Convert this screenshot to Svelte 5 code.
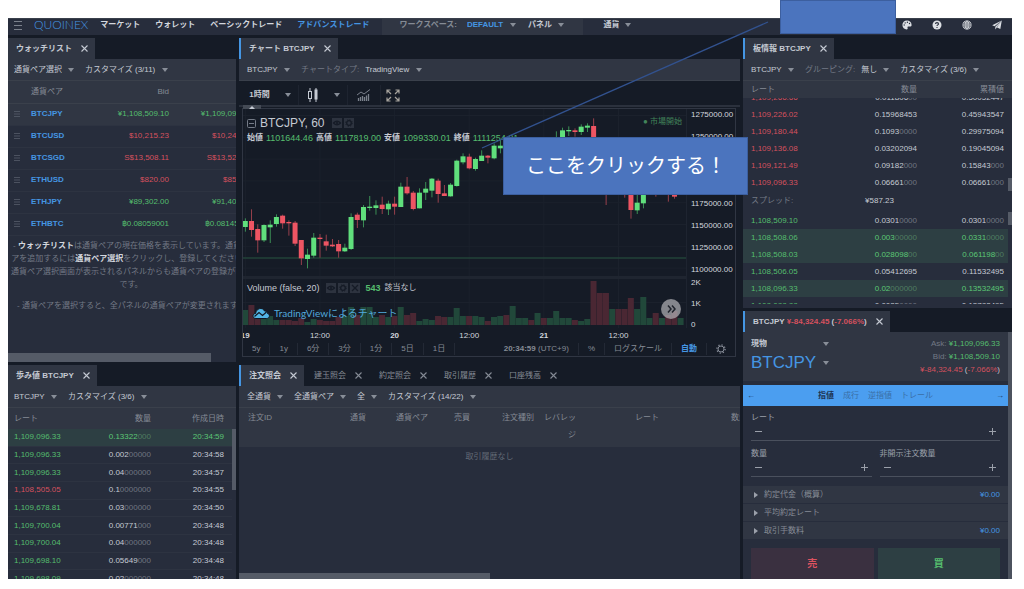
<script>
  const navLinks = ['マーケット', 'ウォレット', 'ベーシックトレード', 'アドバンストレード'];

  const watchlist = [
    { pair: 'BTCJPY', bid: '¥1,108,509.10', ask: '¥1,109,096.33', up: true },
    { pair: 'BTCUSD', bid: '$10,215.23', ask: '$10,243.20', up: false },
    { pair: 'BTCSGD', bid: 'S$13,508.11', ask: 'S$13,521.74', up: false },
    { pair: 'ETHUSD', bid: '$820.00', ask: '$858.00', up: false },
    { pair: 'ETHJPY', bid: '¥89,302.00', ask: '¥91,400.00', up: true },
    { pair: 'ETHBTC', bid: '฿0.08059001', ask: '฿0.08145000', up: true }
  ];

  // "|" marks where the dimmed trailing zeros begin
  const trades = [
    { rate: '1,109,096.33', qty: '0.13322|000', time: '20:34:59', up: true, fresh: true },
    { rate: '1,109,096.33', qty: '0.002|00000', time: '20:34:58', up: true },
    { rate: '1,109,096.33', qty: '0.04|000000', time: '20:34:57', up: true },
    { rate: '1,108,505.05', qty: '0.1|0000000', time: '20:34:55', up: false },
    { rate: '1,109,678.81', qty: '0.03|000000', time: '20:34:50', up: true },
    { rate: '1,109,700.04', qty: '0.00771|000', time: '20:34:48', up: true },
    { rate: '1,109,700.04', qty: '0.04|000000', time: '20:34:48', up: true },
    { rate: '1,109,698.10', qty: '0.05649|000', time: '20:34:48', up: true },
    { rate: '1,109,698.09', qty: '0.02|000000', time: '20:34:48', up: true }
  ];

  const asks = [
    { rate: '1,109,266.66', qty: '0.011806|00', sum: '0.50052447' },
    { rate: '1,109,226.02', qty: '0.15968453', sum: '0.45943547' },
    { rate: '1,109,180.44', qty: '0.1093|0000', sum: '0.29975094' },
    { rate: '1,109,136.08', qty: '0.03202094', sum: '0.19045094' },
    { rate: '1,109,121.49', qty: '0.09182|000', sum: '0.15843|000' },
    { rate: '1,109,096.33', qty: '0.06661|000', sum: '0.06661|000' }
  ];

  const bids = [
    { rate: '1,108,509.10', qty: '0.0301|0000', sum: '0.0301|0000' },
    { rate: '1,108,508.06', qty: '0.003|00000', sum: '0.0331|0000', fresh: true },
    { rate: '1,108,508.03', qty: '0.028098|00', sum: '0.061198|00', fresh: true },
    { rate: '1,108,506.05', qty: '0.05412695', sum: '0.11532495' },
    { rate: '1,108,096.33', qty: '0.02|000000', sum: '0.13532495', fresh: true },
    { rate: '1,108,088.88', qty: '0.0025|0000', sum: '0.13782495' }
  ];

  const orderTabs = ['注文照会', '建玉照会', '約定照会', '取引履歴', '口座残高'];
  const orderHeads = ['注文ID', '通貨', '通貨ペア', '売買', '注文種別', 'レバレッジ', 'レート', '数量', ''];

  const ohlc = [
    ['始値', '1101644.46'],
    ['高値', '1117819.00'],
    ['安値', '1099330.01'],
    ['終値', '1111254.81']
  ];

  const prices = ['1275000.00', '1250000.00', '1225000.00', '1200000.00', '1175000.00', '1150000.00', '1125000.00', '1100000.00'];
  const times = ['19', '12:00', '20', '12:00', '21', '12:00'];
  const ranges = ['5y', '1y', '6分', '3分', '1分', '5日', '1日'];

  // [up, body top, body bottom, high, low, volume], three units to a pixel
  const candles = [
    [1, 423, 441, 415, 455, 15], [0, 423, 450, 388, 470, 20], [0, 447, 481, 433, 518, 10],
    [1, 435, 481, 433, 486, 9], [1, 434, 442, 421, 489, 9], [1, 411, 432, 403, 440, 5],
    [0, 407, 430, 404, 446, 5], [0, 426, 430, 421, 467, 5], [0, 428, 491, 423, 498, 4],
    [0, 480, 535, 480, 555, 7], [1, 524, 537, 506, 565, 3], [1, 473, 527, 459, 533, 6],
    [0, 473, 477, 462, 533, 5], [0, 484, 497, 464, 512, 4], [0, 494, 499, 477, 501, 4],
    [0, 492, 514, 480, 533, 8], [1, 503, 514, 491, 516, 9], [1, 411, 507, 400, 510, 18],
    [0, 404, 420, 398, 444, 10], [1, 381, 421, 375, 442, 18], [1, 380, 384, 348, 392, 18],
    [1, 376, 384, 361, 404, 8], [0, 374, 387, 350, 402, 10], [1, 371, 388, 362, 405, 8],
    [0, 371, 380, 350, 404, 9], [1, 320, 381, 308, 381, 18], [0, 320, 340, 291, 344, 10],
    [0, 338, 387, 333, 391, 12], [1, 338, 385, 325, 385, 4], [1, 326, 338, 306, 360, 6],
    [1, 296, 332, 294, 352, 5], [0, 302, 342, 296, 368, 9], [0, 340, 348, 315, 348, 8],
    [1, 314, 349, 309, 350, 8], [1, 242, 318, 239, 320, 17], [1, 229, 247, 220, 253, 9],
    [0, 230, 265, 221, 268, 9], [1, 237, 267, 233, 272, 9], [1, 227, 243, 211, 243, 8],
    [0, 227, 233, 225, 250, 4], [1, 197, 235, 190, 238, 8], [1, 197, 205, 180, 220, 9],
    [0, 190, 215, 185, 225, 10], [1, 185, 225, 180, 230, 19], [1, 190, 210, 182, 220, 7],
    [1, 185, 215, 180, 220, 7], [0, 190, 205, 183, 215, 5], [1, 180, 210, 178, 215, 12],
    [0, 185, 220, 180, 225, 7], [1, 180, 220, 178, 225, 7], [1, 172, 200, 154, 210, 14],
    [1, 151, 180, 143, 185, 7], [1, 150, 154, 139, 168, 7], [0, 151, 156, 145, 170, 5],
    [1, 140, 156, 133, 165, 4], [1, 137, 143, 130, 156, 6], [0, 138, 240, 115, 250, 44],
    [0, 235, 280, 230, 300, 32], [0, 250, 335, 240, 375, 32], [1, 250, 310, 240, 330, 16],
    [0, 260, 300, 250, 320, 16], [0, 290, 335, 280, 353, 16], [0, 300, 390, 295, 416, 27],
    [1, 368, 391, 345, 402, 16], [1, 310, 370, 300, 385, 28], [1, 300, 330, 290, 335, 7],
    [0, 300, 335, 295, 350, 12], [1, 300, 330, 290, 340, 7], [0, 300, 335, 290, 365, 10],
    [0, 320, 350, 310, 356, 14], [1, 300, 330, 290, 340, 7]
  ];

  const step = 6.22;
  const y = (v) => v / 3 - 29;
  const timeX = (i) => ((2.3 + i * 12 * step) / 443) * 100;
</script>

{#snippet caret()}<i class="caret"></i>{/snippet}

{#snippet drop(value, label, prefix)}
  <label class="drop">
    {#if prefix}<span class="muted">{prefix}</span>{/if}
    <select aria-label={label}><option>{value}</option></select>
    {@render caret()}
  </label>
{/snippet}

{#snippet cross()}
  <button class="close" aria-label="閉じる">
    <svg width="7" height="7" viewBox="0 0 7 7"><path d="M.5 .5l6 6M6.5 .5L.5 6.5" stroke="currentColor" stroke-width="1.1" /></svg>
  </button>
{/snippet}

{#snippet num(value)}{value.split('|')[0]}<span class="zeros">{value.split('|')[1] ?? ''}</span>{/snippet}

{#snippet eye()}
  <svg class="mini" width="10" height="10" viewBox="0 0 10 10"><rect width="10" height="10" fill="#2d333f" /><path d="M1.5 5Q5 1.2 8.5 5Q5 8.8 1.5 5z" fill="none" stroke="#151b26" stroke-width="1.2" /><circle cx="5" cy="5" r="1.1" fill="#151b26" /></svg>
{/snippet}

{#snippet cog()}
  <svg class="mini" width="10" height="10" viewBox="0 0 10 10"><rect width="10" height="10" fill="#2d333f" /><circle cx="5" cy="5" r="2.3" fill="none" stroke="#151b26" stroke-width="1.3" /><circle cx="5" cy="5" r="3.3" fill="none" stroke="#151b26" stroke-width="1" stroke-dasharray="1.3 1.3" /></svg>
{/snippet}

{#snippet book(rows, side)}
  <table class="book">
    <tbody>
      {#each rows as row}
        <tr class:fresh={row.fresh}>
          <td class={side}>{row.rate}</td>
          <td>{@render num(row.qty)}</td>
          <td>{@render num(row.sum)}</td>
        </tr>
      {/each}
    </tbody>
  </table>
{/snippet}

<div class="app">
  <header>
    <button class="menu" aria-label="メニュー">
      <svg width="8" height="9" viewBox="0 0 8 9"><path d="M0 .5h8M0 4.5h8M0 8.5h8" stroke="#7b818c" /></svg>
    </button>
    <span class="logo">QUOINEX</span>
    <nav>
      {#each navLinks as link, i}
        <a href="#{i}" class:active={i === 3}>{link}</a>
      {/each}
    </nav>
    <div class="space">
      {@render drop('DEFAULT', 'ワークスペース', 'ワークスペース:')}
      {@render drop('パネル', 'パネル')}
    </div>
    {@render drop('通貨', '通貨')}
    <div class="tools">
      <button aria-label="テーマ">
        <svg width="10" height="10" viewBox="0 0 10 10"><path d="M5 .6C2.3.6.4 2.5.4 5c0 2.6 2 4.4 4.3 4.4.9 0 1.1-.6.9-1.2-.3-.9 0-1.6.9-1.6h1.4c1 0 1.7-.7 1.7-1.7C9.6 2.3 7.5.6 5 .6z" fill="currentColor" /><g fill="#272d3c"><circle cx="2.2" cy="5" r=".7" /><circle cx="3.2" cy="2.9" r=".7" /><circle cx="5.4" cy="2.2" r=".7" /><circle cx="7.5" cy="3.5" r=".7" /></g></svg>
      </button>
      <button aria-label="ヘルプ">
        <svg width="10" height="10" viewBox="0 0 10 10"><circle cx="5" cy="5" r="4.5" fill="currentColor" /><path d="M3.5 4C3.5 2.1 6.5 2.2 6.5 3.9 6.5 4.9 5 4.9 5 6M5 6.9v1" fill="none" stroke="#272d3c" stroke-width="1.1" /></svg>
      </button>
      <button aria-label="言語">
        <svg width="10" height="10" viewBox="0 0 10 10" fill="none" stroke="currentColor" stroke-width=".8"><circle cx="5" cy="5" r="4.1" /><ellipse cx="5" cy="5" rx="1.9" ry="4.1" /><path d="M1 5h8M1.6 3h6.8M1.6 7h6.8M5 1v8" /></svg>
      </button>
      <button aria-label="送信">
        <svg width="10" height="10" viewBox="0 0 10 10"><path d="M9.8.6L.2 5.3l2.3 1zM9.8.6L3.3 6.8v2.8l1.5-2zM9.8.6L8.3 9 4.6 7.2z" fill="currentColor" /></svg>
      </button>
    </div>
  </header>

  <main>
    <div class="column left">
      <section class="panel">
        <div class="tabs"><div class="tab plain">ウォッチリスト {@render cross()}</div></div>
        <div class="toolbar">
          {@render drop('通貨ペア選択', '通貨ペア選択')}
          {@render drop('カスタマイズ (3/11)', 'カスタマイズ')}
        </div>
        <div class="scroll">
          <table class="watch">
            <thead><tr><th></th><th>通貨ペア</th><th>Bid</th><th>Ask</th></tr></thead>
            <tbody>
              {#each watchlist as row, i}
                <tr class:selected={i === 0}>
                  <td><svg width="6" height="6" viewBox="0 0 6 6"><path d="M0 .5h6M0 3h6M0 5.5h6" stroke="#555c69" stroke-width=".8" /></svg></td>
                  <td class="pair">{row.pair}</td>
                  <td class={row.up ? 'up' : 'down'}>{row.bid}</td>
                  <td class={row.up ? 'up' : 'down'}>{row.ask}</td>
                </tr>
              {/each}
            </tbody>
          </table>
          <div class="help">
            <p>
              - <b>ウォッチリスト</b>は通貨ペアの現在価格を表示しています。通貨ペ<br />アを追加するには<b>通貨ペア選択</b>をクリックし、登録してください。<br />通貨ペア選択画面が表示されるパネルからも通貨ペアの登録が可能<br />です。
            </p>
            <p>- 通貨ペアを選択すると、全パネルの通貨ペアが変更されます。</p>
          </div>
        </div>
        <div class="hbar watch-bar"></div>
      </section>

      <section class="panel">
        <div class="tabs"><div class="tab plain">歩み値 BTCJPY {@render cross()}</div></div>
        <div class="toolbar">
          {@render drop('BTCJPY', '通貨ペア')}
          {@render drop('カスタマイズ (3/6)', 'カスタマイズ')}
        </div>
        <div class="trade-head"><span>レート</span><span>数量</span><span>作成日時</span></div>
        <div class="trades">
          <table>
            <tbody>
              {#each trades as t}
                <tr class:fresh={t.fresh}>
                  <td class={t.up ? 'up' : 'down'}>{t.rate}</td>
                  <td>{@render num(t.qty)}</td>
                  <td>{t.time}</td>
                </tr>
              {/each}
            </tbody>
          </table>
          <div class="vbar trade-bar"></div>
        </div>
      </section>
    </div>

    <div class="column middle">
      <section class="panel dark">
        <div class="tabs"><div class="tab">チャート BTCJPY {@render cross()}</div></div>
        <div class="toolbar">
          {@render drop('BTCJPY', '通貨ペア')}
          {@render drop('TradingView', 'チャートタイプ', 'チャートタイプ:')}
        </div>
        <div class="chart-tools">
          <button class="interval">1時間 {@render caret()}</button>
          <button class="style" aria-label="チャートの種類">
            <svg width="12" height="14" viewBox="0 0 12 14"><path d="M3 0v3M3 11v3" stroke="#c5cad3" /><rect x="1.5" y="3.5" width="3" height="7" fill="none" stroke="#c5cad3" /><path d="M9 0v14" stroke="#c5cad3" /><rect x="7.5" y="1.5" width="3" height="10" fill="#c5cad3" /></svg>
            {@render caret()}
          </button>
          <button class="study" aria-label="インジケーター">
            <svg width="14" height="12" viewBox="0 0 14 12"><path d="M1.5 12V9M3.5 12V8M5.5 12V7M7.5 12V8M9.5 12V6.5M11.5 12V5" stroke="#7b818c" stroke-width="1.3" /><path d="M0 6l4-3 3 2 6-4.5" fill="none" stroke="#7b818c" /></svg>
          </button>
          <button class="full" aria-label="全画面">
            <svg width="14" height="13" viewBox="0 0 14 13"><g fill="none" stroke="#a5a29c" stroke-width="1.2"><path d="M1 4.5V1h3.5M1 1l4 4M9.5 1H13v3.5M13 1L9 5M1 8.5V12h3.5M1 12l4-4M9.5 12H13V8.5M13 12L9 8" /></g></svg>
          </button>
        </div>
        <div class="frame">
          <button class="fold" aria-label="ツールバーを隠す"><svg width="6" height="3" viewBox="0 0 6 3"><path d="M0 3l3-3 3 3z" fill="#c5cad3" /></svg></button>
          <div class="plot-row">
            <div class="plot">
              <svg class="graph" viewBox="0 0 443 219" preserveAspectRatio="none">
                <g stroke="#1b212c">
                  {#each times as _, i}
                    <path d="M{2.3 + i * 12 * step} 0V219" />
                  {/each}
                  {#each prices as _, i}
                    <path d="M0 {6.5 + i * 21.8}H443" />
                  {/each}
                  <path d="M0 193.5H443" />
                </g>
                <path d="M0 149H443" stroke="#224338" stroke-width="1.5" />
                <rect y="167" width="443" height="3" fill="#1f2530" />
                {#each candles as [up, top, bottom, high, low, vol], i}
                  <g transform="translate({2.3 + i * step} 0)" class={up ? 'rise' : 'fall'}>
                    <rect class="vol" x="-3.1" y={216 - vol} width="6" height={vol} />
                    <rect class="wick" x="-.4" y={y(high)} width=".9" height={(low - high) / 3} />
                    <rect x="-2.5" y={y(top)} width="5" height={(bottom - top) / 3} />
                  </g>
                {/each}
              </svg>
              <div class="legend">
                <div class="symbol">
                  <svg width="9" height="9" viewBox="0 0 9 9"><rect x=".5" y=".5" width="8" height="8" rx="1" fill="none" stroke="#747b87" /><path d="M2 4.5h5" stroke="#747b87" /></svg>
                  <span>BTCJPY, 60</span>
                  {@render eye()}{@render cog()}
                </div>
                <div class="ohlc">
                  {#each ohlc as [label, value]}
                    <b>{label}</b><span class="up">{value}</span>
                  {/each}
                </div>
              </div>
              <div class="market">● 市場開始</div>
              <div class="volume-legend">
                <span class="name">Volume (false, 20)</span>
                {@render eye()}{@render cog()}
                <svg class="mini" width="10" height="10" viewBox="0 0 10 10"><rect width="10" height="10" fill="#2d333f" /><path d="M2 2l6 6M8 2L2 8" stroke="#151b26" stroke-width="1.3" /></svg>
                <b class="up">543</b><span>該当なし</span>
              </div>
              <a class="credit" href="#tradingview">
                <svg width="18" height="12" viewBox="0 0 18 12"><path d="M4 11.5C0 11.5.2 6.6 3.6 6.5 4 1.5 10.5-.5 12.5 4c2 0 3 1 3 2.5 3 .8 2.3 5-.8 5z" fill="#52b4e4" stroke="#111722" /><path d="M2.5 9.5L7 5.5l3.5 3 4-3.5" fill="none" stroke="#111722" stroke-width="1.2" /></svg>
                TradingViewによるチャート
              </a>
              <button class="forward" aria-label="最新へ"><svg width="9" height="8" viewBox="0 0 9 8"><path d="M1 .5L4 4 1 7.5M5 .5L8 4 5 7.5" fill="none" stroke="#20242d" stroke-width="1.5" /></svg></button>
            </div>
            <div class="axis">
              <div class="price-axis">{#each prices as p}<span>{p}</span>{/each}</div>
              <div class="volume-axis"><span>2K</span><span>1K</span><span>0</span></div>
            </div>
          </div>
          <div class="time-axis">
            {#each times as t, i}
              <span class:day={i % 2 === 0} style="left: {timeX(i)}%">{t}</span>
            {/each}
          </div>
          <div class="ranges">
            {#each ranges as r}<button>{r}</button>{/each}
            <span class="clock"><b>20:34:59</b> (UTC+9)</span>
            <button>%</button>
            <button>ログスケール</button>
            <button class="auto">自動</button>
            <button aria-label="設定"><svg width="10" height="10" viewBox="0 0 10 10"><circle cx="5" cy="5" r="3" fill="none" stroke="#858b96" /><circle cx="5" cy="5" r="4.1" fill="none" stroke="#858b96" stroke-width="1.3" stroke-dasharray="1.3 1.92" /></svg></button>
          </div>
        </div>
      </section>

      <section class="panel">
        <div class="tabs">
          {#each orderTabs as name, i}
            <div class="tab" class:idle={i > 0}>{name} {@render cross()}</div>
          {/each}
        </div>
        <div class="toolbar">
          {@render drop('全通貨', '通貨')}
          {@render drop('全通貨ペア', '通貨ペア')}
          {@render drop('全', '種別')}
          {@render drop('カスタマイズ (14/22)', 'カスタマイズ')}
        </div>
        <div class="scroll">
          <table class="orders">
            <thead><tr>{#each orderHeads as h}<th>{h}</th>{/each}</tr></thead>
          </table>
          <p class="empty">取引履歴なし</p>
        </div>
        <div class="hbar order-bar"></div>
      </section>
    </div>

    <div class="column right">
      <section class="panel">
        <div class="tabs"><div class="tab">板情報 BTCJPY {@render cross()}</div></div>
        <div class="toolbar">
          {@render drop('BTCJPY', '通貨ペア')}
          {@render drop('無し', 'グルーピング', 'グルーピング:')}
          {@render drop('カスタマイズ (3/6)', 'カスタマイズ')}
        </div>
        <div class="book-head"><span>レート</span><span>数量</span><span>累積値</span></div>
        <div class="asks">{@render book(asks, 'down')}<div class="vbar"></div></div>
        <div class="spread"><span class="muted">スプレッド:</span><span>¥587.23</span></div>
        <div class="bids">{@render book(bids, 'up')}<div class="vbar"></div></div>
      </section>

      <section class="panel">
        <div class="tabs">
          <div class="tab"><span>BTCJPY <span class="down">¥-84,324.45</span> (<span class="down">-7.066%</span>)</span> {@render cross()}</div>
        </div>
        <form class="order" onsubmit={(e) => e.preventDefault()}>
          <div class="product">
            <div class="picks">
              <label class="drop kind"><select aria-label="取引種別"><option>現物</option></select>{@render caret()}</label>
              <label class="drop big"><select aria-label="通貨ペア"><option>BTCJPY</option></select>{@render caret()}</label>
            </div>
            <div class="quote">
              <div><span class="muted">Ask:</span> <span class="up">¥1,109,096.33</span></div>
              <div><span class="muted">Bid:</span> <span class="up">¥1,108,509.10</span></div>
              <div><span class="down">¥-84,324.45</span> (<span class="down">-7.066%</span>)</div>
            </div>
          </div>
          <div class="types">
            <button type="button">←</button>
            <div>
              <button type="button" class="on">指値</button>
              <button type="button">成行</button>
              <button type="button">逆指値</button>
              <button type="button">トレール</button>
            </div>
            <button type="button">→</button>
          </div>
          <div class="fields">
            {#each ['レート', '数量', '非開示注文数量'] as name, i}
              <div class="field" class:wide={i === 0}>
                <label for="field{i}">{name}</label>
                <div class="stepper">
                  <button type="button" aria-label="減らす"><svg width="8" height="8" viewBox="0 0 8 8"><path d="M0 4.5h7" stroke="currentColor" /></svg></button>
                  <input id="field{i}" type="text" />
                  <button type="button" aria-label="増やす"><svg width="8" height="8" viewBox="0 0 8 8"><path d="M1 4.5h7M4.5 1v7" stroke="currentColor" /></svg></button>
                </div>
              </div>
            {/each}
          </div>
          <div class="totals">
            {#each [['約定代金（概算）', '¥0.00'], ['平均約定レート', ''], ['取引手数料', '¥0.00']] as [name, value]}
              <div class="total"><i class="arrow"></i>{name}<span>{value}</span></div>
            {/each}
          </div>
          <div class="actions">
            <button class="sell">売</button>
            <button class="buy">買</button>
          </div>
        </form>
      </section>
    </div>
  </main>
</div>

<svg class="pointer"><path d="M482 148L768 22" stroke="#32528f" stroke-width="1.3" /></svg>
<div class="cover"></div>
<div class="callout">ここをクリックする！</div>

<style>
  :global(body) {
    background: #fff;
    overflow: hidden;
  }

  :global(*) {
    box-sizing: border-box;
  }

  .app {
    display: flex;
    flex-direction: column;
    height: calc(100vh - 28px);
    margin: 18px 12px 10px 8px;
    overflow: hidden;
    background: #151b26;
    color: #c5cad3;
    font: 8px/12px 'Liberation Sans', 'Noto Sans CJK JP', sans-serif;
  }

  button, select, input {
    appearance: none;
    margin: 0;
    padding: 0;
    border: 0;
    background: none;
    color: inherit;
    font: inherit;
  }

  svg {
    display: block;
    flex: none;
  }

  p {
    margin: 0;
  }

  table {
    border-collapse: collapse;
    table-layout: fixed;
  }

  th, td {
    padding: 0;
    text-align: right;
    font-weight: normal;
    white-space: nowrap;
  }

  .up { color: #55bd6e; }
  .down { color: #d5515e; }
  .muted { color: #737985; }
  .zeros { color: #6f7581; }
  .fresh { background: #2d3f43; color: #5cc775; }
  .fresh .zeros { color: #4f7d61; }

  .caret {
    flex: none;
    border: 3px solid transparent;
    border-top: 4px solid #888e98;
    border-bottom: 0;
  }

  .drop {
    display: flex;
    align-items: center;
    gap: 6px;
  }

  header {
    display: flex;
    flex: none;
    height: 17px;
    padding-left: 6px;
    background: #272d3c;
    border-top: 1px solid #3a404c;
    font-weight: bold;
  }

  header > * {
    height: 12px;
  }

  .logo {
    margin: 0 12px;
    color: #4596e3;
    font: 300 12px/12px Lato, sans-serif;
  }

  nav {
    display: flex;
    gap: 15px;
  }

  nav a {
    color: #d3d7de;
    text-decoration: none;
  }

  nav .active {
    color: #4596e3;
  }

  .space {
    display: flex;
    gap: 12px;
    width: 201px;
    height: 16px;
    margin: 0 20px 0 13px;
    padding: 0 0 4px 17px;
    background: #303643;
  }

  .space .muted {
    margin-right: 4px;
    color: #858b95;
  }

  .space .drop:first-child select {
    color: #4596e3;
  }

  .tools {
    display: flex;
    gap: 20px;
    margin: 0 10px 0 auto;
    color: #dde0e5;
  }

  main {
    display: grid;
    flex: 1;
    grid-template-columns: minmax(0, 228fr) minmax(0, 501fr) minmax(0, 269fr);
    gap: 3px;
    min-height: 0;
    padding-top: 3px;
  }

  .column {
    display: grid;
    grid-template-columns: minmax(0, 1fr);
    grid-template-rows: minmax(0, 324fr) minmax(0, 214fr);
    gap: 3px;
    min-height: 0;
  }

  .right {
    grid-template-rows: minmax(0, 270fr) minmax(0, 268fr);
  }

  .panel {
    display: flex;
    flex-direction: column;
    overflow: hidden;
    background: #272d3c;
  }

  .dark {
    background: #151b26;
  }

  .tabs {
    display: flex;
    flex: none;
    height: 21px;
    background: #151b26;
  }

  .tab {
    display: flex;
    align-items: center;
    gap: 9px;
    padding: 0 7px 0 8px;
    border-left: 2px solid #4596e3;
    background: #303643;
    font-weight: bold;
    white-space: nowrap;
  }

  .tab.plain {
    border: 0;
  }

  .tab.idle {
    border-color: transparent;
    background: none;
    color: #858b95;
    font-weight: normal;
  }

  .toolbar {
    display: flex;
    flex: none;
    gap: 11px;
    align-items: center;
    height: 22px;
    padding: 0 6px;
    background: #303643;
    border-bottom: 1px solid #3a404b;
  }

  .middle .toolbar,
  .right .toolbar {
    padding-left: 8px;
  }

  .scroll {
    flex: 1;
    min-height: 0;
    overflow: hidden;
  }

  .hbar {
    flex: none;
    background: #555b67;
  }

  .watch-bar {
    width: 89%;
    height: 9px;
  }

  .order-bar {
    width: 50%;
    height: 6px;
  }

  .vbar {
    flex: none;
    width: 4px;
    background: #555b67;
  }

  .watch {
    width: 258px;
  }

  .watch th, .watch td {
    height: 22px;
    border-bottom: 1px solid #2d3341;
  }

  .watch th {
    background: #303643;
    border-color: #3a404b;
    color: #858b95;
  }

  .watch th:nth-child(1) { width: 15px; }
  .watch th:nth-child(2) { width: 62px; }
  .watch th:nth-child(3) { width: 84px; }

  .watch tr > :nth-child(1) {
    padding-left: 6px;
  }

  .watch tr > :nth-child(2) {
    padding-left: 8px;
    text-align: left;
  }

  .watch tr > :last-child {
    padding-right: 14px;
  }

  .selected {
    background: #303643;
  }

  .pair {
    color: #4596e3;
    font-weight: bold;
  }

  .help {
    width: 246px;
    padding-top: 3px;
    color: #737985;
    line-height: 13px;
    text-align: center;
    white-space: nowrap;
  }

  .help b {
    color: #d3d7de;
  }

  .help p + p {
    margin-top: 8px;
  }

  .trade-head {
    display: flex;
    flex: none;
    align-items: center;
    height: 21px;
    padding: 0 12px 0 6px;
    background: #303643;
    color: #858b95;
  }

  .trade-head span:nth-child(2) {
    flex: 1;
    padding-right: 41px;
    text-align: right;
  }

  .trades {
    display: flex;
    flex: 1;
    align-items: flex-start;
    min-height: 0;
    overflow: hidden;
  }

  .trades table {
    flex: 1;
    width: 100%;
    height: 159px;
  }

  .trades td {
    border-bottom: 1px solid #2d3341;
  }

  .trades td:first-child {
    padding-left: 6px;
    text-align: left;
  }

  .trades td:nth-child(2) {
    width: 73px;
  }

  .trades td:last-child {
    width: 81px;
    padding-right: 8px;
  }

  .trade-bar {
    height: 61px;
  }

  .chart-tools {
    display: flex;
    flex: none;
    align-items: center;
    height: 26px;
    padding-top: 4px;
    border-bottom: 2px solid #2b313d;
  }

  .chart-tools button {
    display: flex;
    align-items: center;
    justify-content: center;
    gap: 15px;
    height: 20px;
    border-right: 1px solid #1e2430;
  }

  .interval {
    width: 60px;
    padding-left: 3px;
    font-weight: bold;
  }

  .style { width: 49px; }
  .study { width: 33px; }
  .full { width: 24px; }

  .chart-tools .full {
    border: 0;
  }

  .frame {
    position: relative;
    display: flex;
    flex: 1;
    flex-direction: column;
    min-height: 0;
    margin: 1px 4px 5px 3px;
    border: 1px solid #303643;
  }

  .fold {
    position: absolute;
    top: -4px;
    left: 0;
    display: flex;
    align-items: center;
    justify-content: center;
    width: 18px;
    height: 4px;
    background: #444a55;
  }

  .plot-row {
    display: flex;
    flex: 1;
    min-height: 0;
  }

  .plot {
    position: relative;
    flex: 1;
    overflow: hidden;
  }

  .graph {
    position: absolute;
    width: 100%;
    height: 100%;
  }

  .rise { fill: #60df7c; }
  .fall { fill: #ee5563; }
  .rise .wick { fill: #3f9a5a; }
  .fall .wick { fill: #a54450; }
  .rise .vol { fill: #21483a; }
  .fall .vol { fill: #4a2733; }

  .legend {
    position: absolute;
    top: 6px;
    left: 4px;
  }

  .symbol {
    display: flex;
    align-items: center;
    gap: 2px;
    font-size: 12px;
    line-height: 16px;
  }

  .symbol span {
    margin: 0 6px 0 2px;
  }

  .ohlc {
    display: flex;
    gap: 3px;
    line-height: 14px;
    white-space: nowrap;
  }

  .ohlc span {
    font-size: 9px;
  }

  .market {
    position: absolute;
    top: 7px;
    right: 4px;
    color: #42845a;
  }

  .volume-legend {
    position: absolute;
    bottom: 34px;
    left: 4px;
    display: flex;
    align-items: center;
    gap: 2px;
  }

  .volume-legend .name {
    margin-right: 4px;
    font-size: 9px;
  }

  .volume-legend b {
    margin: 0 2px 0 4px;
    font-size: 9px;
  }

  .credit {
    position: absolute;
    bottom: 8px;
    left: 9px;
    display: flex;
    align-items: center;
    gap: 4px;
    color: #52a9dc;
    font: 10px/14px Lato, 'Noto Sans CJK JP', sans-serif;
    text-decoration: none;
  }

  .forward {
    position: absolute;
    right: 5px;
    bottom: 9px;
    display: flex;
    align-items: center;
    justify-content: center;
    width: 20px;
    height: 20px;
    border-radius: 50%;
    background: rgba(180, 180, 184, 0.7);
  }

  .axis {
    display: flex;
    flex-direction: column;
    width: 49px;
    padding-left: 4px;
    border-left: 1px solid #1e2430;
    color: #d3d7de;
    line-height: 10px;
  }

  .price-axis, .volume-axis {
    display: flex;
    flex-direction: column;
    justify-content: space-between;
  }

  .price-axis {
    flex: 171;
    padding: 1px 0 7px;
  }

  .volume-axis {
    flex: 54;
    margin: -4px 0 -2px;
  }

  .time-axis {
    position: relative;
    flex: none;
    width: calc(100% - 49px);
    height: 14px;
    overflow: hidden;
    color: #d3d7de;
  }

  .time-axis span {
    position: absolute;
    top: 2px;
    transform: translateX(-50%);
  }

  .time-axis .day {
    font-weight: bold;
  }

  .ranges {
    display: flex;
    flex: none;
    align-items: center;
    height: 14px;
    color: #858b95;
  }

  .ranges button, .clock {
    padding: 0 9px;
    border-right: 1px solid #232935;
  }

  .ranges button:last-child {
    border: 0;
  }

  .clock {
    margin-left: auto;
  }

  .ranges .auto {
    color: #4596e3;
    font-weight: bold;
  }

  .orders {
    width: 1000px;
    background: #303643;
    color: #858b95;
  }

  .orders th {
    height: 39px;
    padding-top: 1px;
    line-height: 17px;
    vertical-align: top;
    white-space: normal;
  }

  .orders th:nth-child(1) {
    width: 65px;
    padding-left: 9px;
    text-align: left;
  }

  .orders th:nth-child(2), .orders th:nth-child(3) { width: 62px; }
  .orders th:nth-child(4) { width: 42px; }
  .orders th:nth-child(5) { width: 64px; }
  .orders th:nth-child(6) { width: 42px; padding-left: 8px; line-break: anywhere; }
  .orders th:nth-child(7) { width: 83px; }
  .orders th:nth-child(8) { width: 88px; }

  .empty {
    padding-top: 4px;
    color: #636a76;
    text-align: center;
  }

  .book-head {
    display: grid;
    flex: none;
    grid-template-columns: 1fr 80px 87px;
    align-items: center;
    height: 17px;
    padding: 0 8px;
    background: #303643;
    color: #858b95;
    text-align: right;
  }

  .book-head span:first-child {
    text-align: left;
  }

  .asks, .bids {
    display: flex;
    flex: none;
    overflow: hidden;
  }

  .asks {
    align-items: flex-end;
    height: 93px;
  }

  .bids {
    flex: 1;
    align-items: flex-start;
    min-height: 0;
    margin-bottom: 4px;
    padding-top: 1px;
  }

  .book {
    flex: 1;
  }

  .book td {
    height: 17px;
  }

  .book td:first-child {
    padding-left: 8px;
    text-align: left;
  }

  .book td:last-child {
    width: 91px;
    padding-right: 4px;
  }

  .asks .vbar, .bids .vbar {
    height: 13px;
  }

  .spread {
    display: grid;
    flex: none;
    grid-template-columns: 1fr 1fr 1fr;
    align-items: center;
    height: 20px;
    padding: 0 4px 0 8px;
    text-align: center;
  }

  .spread span:first-child {
    text-align: left;
  }

  .order {
    flex: 1;
    min-height: 0;
    overflow: hidden;
    border-right: 4px solid #4c525e;
  }

  .product {
    display: flex;
    justify-content: space-between;
    height: 49px;
    padding: 5px 8px 0;
    background: #303643;
  }

  .picks {
    display: flex;
    flex-direction: column;
    gap: 2px;
  }

  .kind {
    justify-content: space-between;
    height: 14px;
    font-weight: bold;
  }

  .big {
    height: 20px;
    color: #4596e3;
    font-size: 17px;
    line-height: 20px;
  }

  .quote {
    line-height: 13px;
    text-align: right;
  }

  .types {
    display: flex;
    align-items: center;
    justify-content: space-between;
    height: 21px;
    margin-top: 4px;
    padding: 0 4px;
    background: #4b9ef0;
    color: #3a6ea6;
  }

  .types > button {
    color: #1c3a63;
  }

  .types div {
    display: flex;
    gap: 9px;
  }

  .types .on {
    color: #1d3352;
    font-weight: bold;
  }

  .fields {
    display: grid;
    grid-template-columns: minmax(0, 1fr) minmax(0, 1fr);
    gap: 7px 8px;
    padding: 6px 8px 9px;
    color: #9ba0aa;
  }

  .wide {
    grid-column: 1 / -1;
  }

  .field label {
    display: block;
  }

  .stepper {
    display: flex;
    align-items: center;
    height: 17px;
    padding: 0 4px 2px;
    border-bottom: 1px solid #4a505d;
  }

  .stepper input {
    flex: 1;
    min-width: 0;
  }

  .totals {
    display: grid;
    gap: 1px;
  }

  .total {
    display: flex;
    align-items: center;
    height: 17px;
    padding: 0 8px 0 11px;
    background: #303643;
    color: #858b95;
  }

  .total span {
    margin-left: auto;
    color: #4596e3;
  }

  .arrow {
    margin-right: 6px;
    border: 3px solid transparent;
    border-left: 4px solid #9ba0aa;
    border-right: 0;
  }

  .actions {
    display: grid;
    grid-template-columns: 1fr 1fr;
    gap: 4px;
    padding: 9px 8px 0;
  }

  .actions button {
    height: 32px;
    font-size: 10px;
    font-weight: bold;
  }

  .sell {
    background: #3a3040;
    color: #dd5360;
  }

  .buy {
    background: #2d3f43;
    color: #55bd6e;
  }

  .pointer {
    position: absolute;
    top: 0;
    left: 0;
    width: 100%;
    height: 200px;
    pointer-events: none;
  }

  .cover, .callout {
    position: absolute;
    background: #4b74be;
    border: 1px solid #3c5f9f;
  }

  .cover {
    top: 0;
    left: 780px;
    width: 116px;
    height: 34px;
  }

  .callout {
    top: 137px;
    left: 503px;
    width: 245px;
    height: 58px;
    padding-left: 22px;
    color: #fff;
    font: 20px/54px 'Noto Sans CJK JP', sans-serif;
    white-space: nowrap;
  }
</style>
